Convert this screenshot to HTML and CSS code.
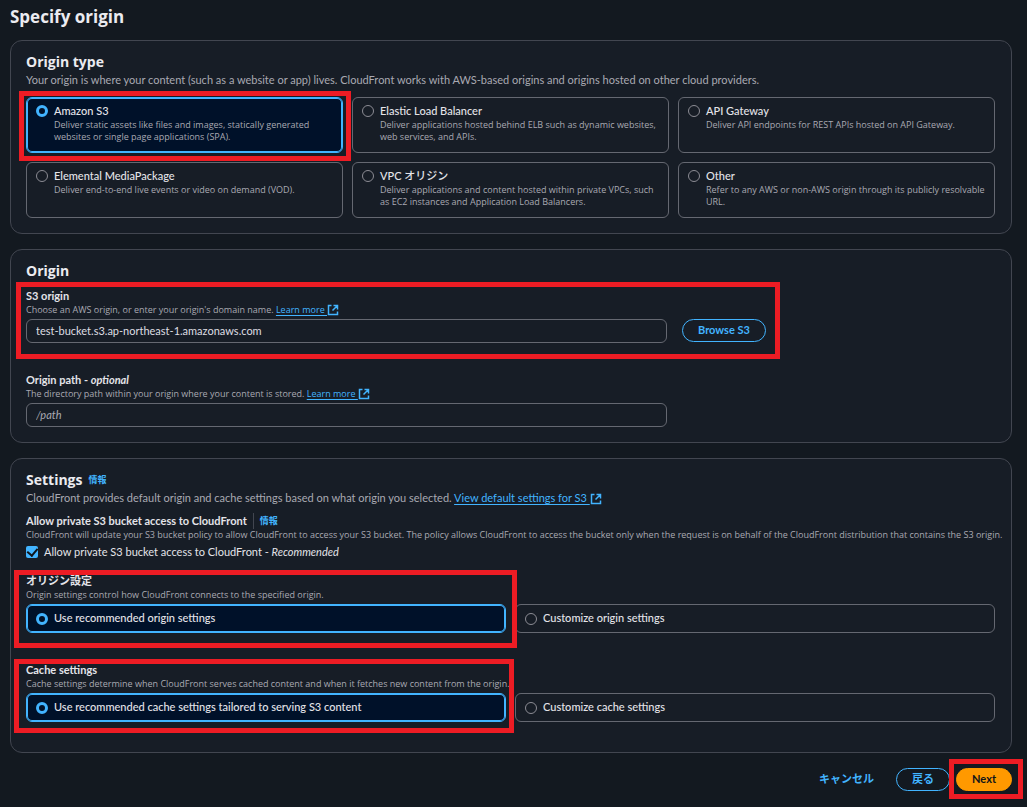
FILE: index.html
```html
<!DOCTYPE html>
<html lang="en">
<head>
<meta charset="utf-8">
<meta name="viewport" content="width=device-width, initial-scale=1">
<title>Specify origin</title>
<link rel="stylesheet" href="styles.css">
</head>
<body>
<svg class="sprite" aria-hidden="true">
  <symbol id="external" viewBox="0 0 12 12">
    <path d="M4.5 1.5H1.5V10.5H10.5V7.5M6.5 1.5H10.5V5.5M10.5 1.5L5.5 6.5" fill="none" stroke="currentColor" stroke-width="1.5"/>
  </symbol>
</svg>
<form class="page">
  <h1 class="page-title">Specify origin</h1>

  <section class="panel">
    <h2 class="panel-title">Origin type</h2>
    <p class="panel-text">Your origin is where your content (such as a website or app) lives. CloudFront works with AWS-based origins and origins hosted on other cloud providers.</p>
    <div class="tiles tiles-three">
      <label class="tile tile-selected">
        <input class="radio" type="radio" name="origin-type" checked>
        <span class="tile-body"><span class="tile-title">Amazon S3</span><span class="hint">Deliver static assets like files and images, statically generated websites or single page applications (SPA).</span></span>
        <span class="marker marker-type"></span>
      </label>
      <label class="tile">
        <input class="radio" type="radio" name="origin-type">
        <span class="tile-body"><span class="tile-title">Elastic Load Balancer</span><span class="hint">Deliver applications hosted behind ELB such as dynamic websites, web services, and APIs.</span></span>
      </label>
      <label class="tile">
        <input class="radio" type="radio" name="origin-type">
        <span class="tile-body"><span class="tile-title">API Gateway</span><span class="hint">Deliver API endpoints for REST APIs hosted on API Gateway.</span></span>
      </label>
      <label class="tile">
        <input class="radio" type="radio" name="origin-type">
        <span class="tile-body"><span class="tile-title">Elemental MediaPackage</span><span class="hint">Deliver end-to-end live events or video on demand (VOD).</span></span>
      </label>
      <label class="tile">
        <input class="radio" type="radio" name="origin-type">
        <span class="tile-body"><span class="tile-title">VPC オリジン</span><span class="hint">Deliver applications and content hosted within private VPCs, such as EC2 instances and Application Load Balancers.</span></span>
      </label>
      <label class="tile">
        <input class="radio" type="radio" name="origin-type">
        <span class="tile-body"><span class="tile-title">Other</span><span class="hint">Refer to any AWS or non-AWS origin through its publicly resolvable URL.</span></span>
      </label>
    </div>
  </section>

  <section class="panel">
    <h2 class="panel-title">Origin</h2>
    <div class="field field-origin">
      <label class="field-label" for="s3-origin">S3 origin</label>
      <p class="hint">Choose an AWS origin, or enter your origin's domain name. <a class="link" href="#">Learn more </a><svg class="icon" aria-hidden="true"><use href="#external"/></svg></p>
      <div class="control-row">
        <input class="text-input" id="s3-origin" type="text" value="test-bucket.s3.ap-northeast-1.amazonaws.com">
        <button class="button" type="button">Browse S3</button>
      </div>
      <span class="marker marker-origin"></span>
    </div>
    <div class="field field-path">
      <label class="field-label" for="origin-path">Origin path - <em>optional</em></label>
      <p class="hint">The directory path within your origin where your content is stored. <a class="link" href="#">Learn more </a><svg class="icon" aria-hidden="true"><use href="#external"/></svg></p>
      <div class="control-row">
        <input class="text-input" id="origin-path" type="text" placeholder="/path">
      </div>
    </div>
  </section>

  <section class="panel panel-settings">
    <div class="title-row">
      <h2 class="panel-title">Settings</h2>
      <a class="info" href="#">情報</a>
    </div>
    <p class="panel-text">CloudFront provides default origin and cache settings based on what origin you selected. <a class="link" href="#">View default settings for S3 </a><svg class="icon" aria-hidden="true"><use href="#external"/></svg></p>
    <div class="field field-access">
      <div class="label-row">
        <span class="field-label">Allow private S3 bucket access to CloudFront</span>
        <a class="info info-divided" href="#">情報</a>
      </div>
      <p class="hint hint-wide">CloudFront will update your S3 bucket policy to allow CloudFront to access your S3 bucket. The policy allows CloudFront to access the bucket only when the request is on behalf of the CloudFront distribution that contains the S3 origin.</p>
      <label class="check-row">
        <input class="checkbox" type="checkbox" checked>
        <span>Allow private S3 bucket access to CloudFront - <em>Recommended</em></span>
      </label>
    </div>
    <div class="field field-settings" role="radiogroup" aria-labelledby="origin-settings">
      <span class="field-label" id="origin-settings">オリジン設定</span>
      <p class="hint">Origin settings control how CloudFront connects to the specified origin.</p>
      <div class="tiles tiles-two">
        <label class="tile tile-selected">
          <input class="radio" type="radio" name="origin-settings" checked>
          <span class="tile-title">Use recommended origin settings</span>
          <span class="marker marker-settings"></span>
        </label>
        <label class="tile">
          <input class="radio" type="radio" name="origin-settings">
          <span class="tile-title">Customize origin settings</span>
        </label>
      </div>
    </div>
    <div class="field field-cache" role="radiogroup" aria-labelledby="cache-settings">
      <span class="field-label" id="cache-settings">Cache settings</span>
      <p class="hint">Cache settings determine when CloudFront serves cached content and when it fetches new content from the origin.</p>
      <div class="tiles tiles-two">
        <label class="tile tile-selected">
          <input class="radio" type="radio" name="cache-settings" checked>
          <span class="tile-title">Use recommended cache settings tailored to serving S3 content</span>
          <span class="marker marker-cache"></span>
        </label>
        <label class="tile">
          <input class="radio" type="radio" name="cache-settings">
          <span class="tile-title">Customize cache settings</span>
        </label>
      </div>
    </div>
  </section>

  <footer class="actions">
    <button class="button button-plain" type="button">キャンセル</button>
    <button class="button" type="button">戻る</button>
    <button class="button button-primary" type="button">Next<span class="marker marker-next"></span></button>
  </footer>
</form>
</body>
</html>
```
FILE: styles.css
```css
* {
  box-sizing: border-box;
}

body {
  margin: 0;
  background: #131920;
  color: #e4e4e9;
  font-family: Lato, "Noto Sans CJK JP", sans-serif;
  font-size: 11px;
  line-height: 16px;
}

h1, h2, p {
  margin: 0;
}

.sprite {
  position: absolute;
  width: 0;
  height: 0;
}

.page {
  display: flex;
  flex-direction: column;
  gap: 15px;
  padding: 5px 15px 15px 10px;
}

.page-title {
  margin-bottom: -4px;
  color: #ebebf0;
  font-family: "Open Sans", sans-serif;
  font-size: 17px;
  font-weight: 700;
  line-height: 24px;
}

.panel {
  padding: 11px 16px 15px 15px;
  border: 1px solid #424650;
  border-radius: 12px;
  background: #171d26;
}

.panel-settings {
  padding-bottom: 30px;
}

.panel-title {
  color: #ebebf0;
  font-family: "Open Sans", sans-serif;
  font-size: 14px;
  font-weight: 700;
  line-height: 20px;
}

.panel-text {
  color: #a9a9b2;
}

.title-row {
  display: flex;
  align-items: center;
  gap: 6px;
}

.hint {
  display: block;
  color: #a9a9b2;
  font-family: "Open Sans", sans-serif;
  font-size: 9px;
  line-height: 12px;
}

.hint-wide {
  margin-right: -16px;
}

.link {
  color: #42b4ff;
  text-decoration: underline;
  text-underline-offset: 2px;
  white-space: pre;
}

.icon {
  width: 12px;
  height: 12px;
  margin: -2px 0;
  color: #42b4ff;
  vertical-align: -1px;
}

.info {
  color: #42b4ff;
  font-size: 9px;
  font-weight: 700;
  text-decoration: none;
}

.info-divided {
  padding-left: 6px;
  border-left: 1px solid #424650;
}

.tiles {
  display: grid;
  gap: 9px;
}

.tiles-three {
  grid-template-columns: repeat(3, 1fr);
  margin-top: 9px;
}

.tiles-two {
  grid-template-columns: repeat(2, 1fr);
  margin-top: 3px;
}

.tile {
  position: relative;
  display: flex;
  align-items: flex-start;
  gap: 6px;
  padding: 5px 9px 9px;
  border: 1px solid #656871;
  border-radius: 6px;
}

.tiles-two .tile {
  padding: 5px 9px 6px;
}

.tile-selected {
  border-color: #42b4ff;
  background: #001129;
  box-shadow: inset 0 0 0 1px #42b4ff;
}

.tile-title {
  display: block;
  font-weight: 500;
}

.radio {
  appearance: none;
  flex: none;
  width: 12px;
  height: 12px;
  margin: 2px 0;
  border: 1px solid #8c8c94;
  border-radius: 50%;
}

.radio:checked {
  border: 3px solid #42b4ff;
}

.tiles-two .radio {
  margin: 3px 0 0;
}

.field {
  position: relative;
}

.field-label {
  display: block;
  font-weight: 700;
}

.field-origin {
  width: fit-content;
  margin-top: 7px;
}

.field-path {
  margin-top: 29px;
}

.field-access {
  margin-top: 7px;
}

.field-settings {
  margin-top: 13px;
}

.field-cache {
  margin-top: 29px;
}

.label-row {
  display: flex;
  gap: 6px;
}

.control-row {
  display: flex;
  gap: 15px;
  margin-top: 3px;
}

.text-input {
  flex: 0 1 auto;
  width: 641px;
  min-width: 0;
  height: 24px;
  padding: 0 9px 2px;
  border: 1px solid #656871;
  border-radius: 6px;
  background: transparent;
  color: #dedee3;
  font: inherit;
}

.text-input::placeholder {
  color: #a9a9b2;
  font-style: italic;
  opacity: 1;
}

.check-row {
  display: flex;
  align-items: center;
  gap: 6px;
  margin-top: 3px;
}

.checkbox {
  appearance: none;
  width: 12px;
  height: 12px;
  margin: 0;
  border-radius: 2px;
  background: #42b4ff;
  display: grid;
  place-items: center;
}

.checkbox:checked::before {
  content: "";
  width: 5px;
  height: 8px;
  border: solid #0f141a;
  border-width: 0 2px 2px 0;
  transform: translateY(-1px) rotate(40deg);
}

.button {
  position: relative;
  height: 23px;
  padding: 0 15px 1px;
  border: 1px solid #42b4ff;
  border-radius: 12px;
  background: transparent;
  color: #42b4ff;
  font: inherit;
  font-weight: 700;
  line-height: 16px;
  white-space: nowrap;
}

.button-plain {
  border-color: transparent;
}

.button-primary {
  border-color: #ff9900;
  background: #ff9900;
  color: #0f141a;
}

.actions {
  display: flex;
  justify-content: flex-end;
  gap: 6px;
}

/* Highlight frames drawn over the form */
.marker {
  position: absolute;
  z-index: 1;
  border: 5px solid #ed1c24;
  pointer-events: none;
}

.marker-type {
  inset: -7px -9px -9px -8px;
}

.marker-origin {
  inset: -6px -14px -16px -10px;
}

.marker-settings {
  inset: -35px -12px -16px -13px;
}

.marker-cache {
  inset: -35px -9px -12px -13px;
}

.marker-next {
  inset: -10px -12px -9px -8px;
}
```
